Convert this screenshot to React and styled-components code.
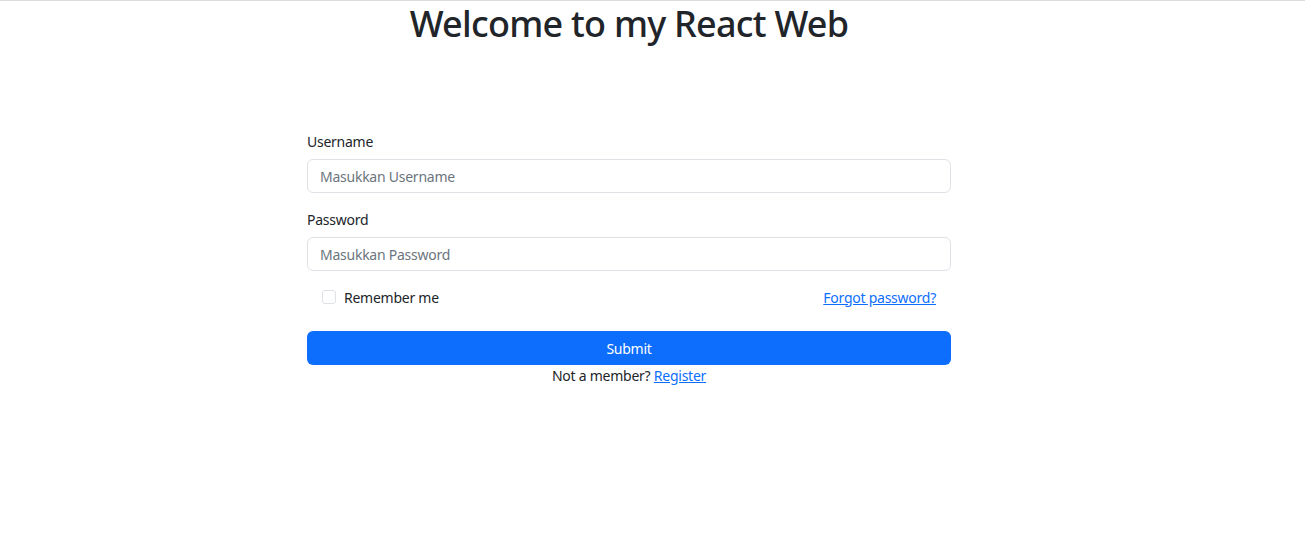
import React from "react";
import styled, { createGlobalStyle } from "styled-components";

const Global = createGlobalStyle`
  html, body { margin: 0; padding: 0; background: #fff; }
  body {
    font-family: "Segoe UI", "Noto Sans", "Open Sans", sans-serif;
    color: #212529;
    border-top: 1px solid #dcdcdc;
  }
`;

const Page = styled.div`
  width: 1258px;
  display: flex;
  flex-direction: column;
  align-items: center;
`;

const Title = styled.h1`
  margin: 3px 0 0;
  font-size: 36px;
  font-weight: 500;
  line-height: 40px;
  letter-spacing: -0.75px;
  color: #212529;
`;

const Form = styled.form`
  width: 644px;
  margin-top: 87px;
  display: flex;
  flex-direction: column;
  letter-spacing: -0.25px;
`;

const Field = styled.div`
  display: flex;
  flex-direction: column;
  margin-bottom: 16px;
`;

const Label = styled.label`
  font-size: 14px;
  line-height: 21px;
  margin-bottom: 7px;
`;

const Input = styled.input`
  box-sizing: border-box;
  height: 34px;
  padding: 0 12px;
  font-family: inherit;
  font-size: 14px;
  letter-spacing: -0.25px;
  color: #212529;
  border: 1px solid #dee2e6;
  border-radius: 6px;
  outline: none;
  &::placeholder { color: #6c757d; opacity: 1; }
`;

const Row = styled.div`
  display: flex;
  justify-content: space-between;
  align-items: center;
  padding: 0 15px;
  margin-top: -1px;
  height: 22px;
`;

const Check = styled.label`
  display: flex;
  align-items: center;
  gap: 8px;
  font-size: 14px;
`;

const Box = styled.span`
  width: 12px;
  height: 12px;
  border: 1px solid #dee2e6;
  border-radius: 3px;
  background: #fff;
`;

const Link = styled.a`
  color: #0d6efd;
  text-decoration: underline;
  font-size: 14px;
  cursor: pointer;
`;

const Button = styled.button`
  margin-top: 23px;
  height: 34px;
  border: none;
  border-radius: 6px;
  background: #0d6efd;
  color: #fff;
  font-family: inherit;
  font-size: 14px;
  letter-spacing: -0.25px;
  cursor: pointer;
`;

const Footer = styled.p`
  margin: 1px 0 0;
  text-align: center;
  font-size: 14px;
  line-height: 20px;
`;

export default function App() {
  return (
    <>
      <Global />
      <Page>
        <Title>Welcome to my React Web</Title>
        <Form onSubmit={(e) => e.preventDefault()}>
          <Field>
            <Label>Username</Label>
            <Input placeholder="Masukkan Username" />
          </Field>
          <Field>
            <Label>Password</Label>
            <Input type="password" placeholder="Masukkan Password" />
          </Field>
          <Row>
            <Check>
              <Box />
              Remember me
            </Check>
            <Link>Forgot password?</Link>
          </Row>
          <Button type="submit">Submit</Button>
          <Footer>
            Not a member? <Link>Register</Link>
          </Footer>
        </Form>
      </Page>
    </>
  );
}
